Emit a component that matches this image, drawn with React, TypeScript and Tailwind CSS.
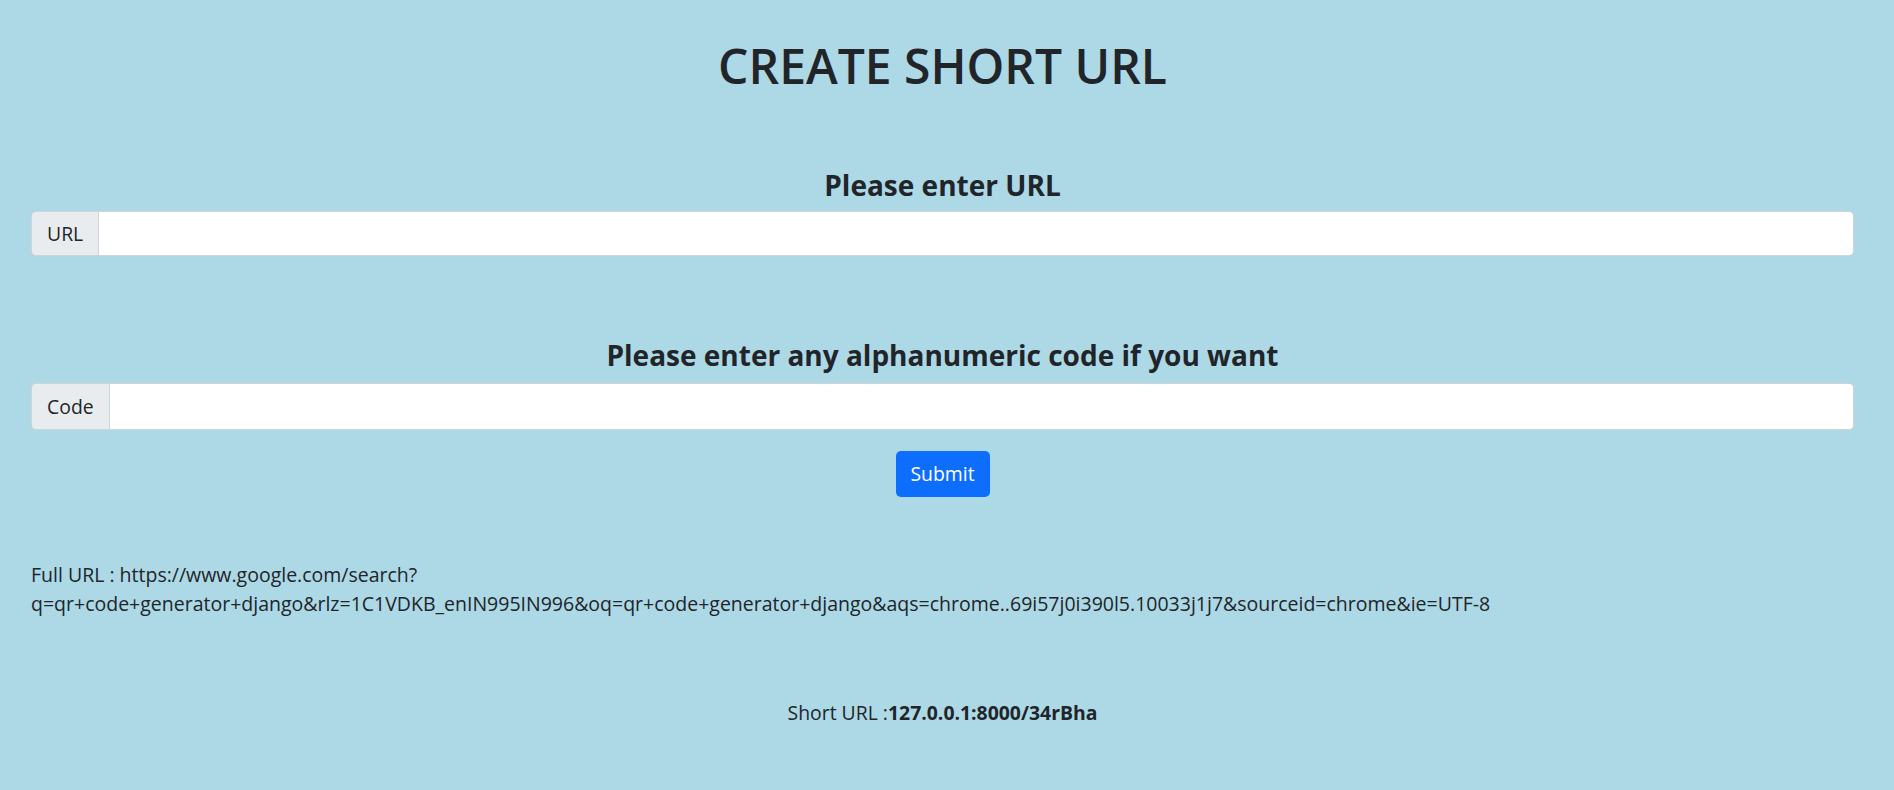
import React from "react";

export default function App() {
  return (
    <div
      className="min-h-screen bg-[#add8e6] text-[#212529] pl-[31px] pr-[40px]"
      style={{ fontFamily: '"Open Sans", "Noto Sans", sans-serif' }}
    >
      <h1 className="text-center text-[48px] leading-[1.2] font-semibold pt-[37px]">
        CREATE SHORT URL
      </h1>
      <h4 className="text-center text-[28px] leading-[1.2] font-bold mt-[74px] mb-[9px]">
        Please enter URL
      </h4>
      <div className="flex h-[45px] rounded-[5px] border border-[#ced4da] overflow-hidden">
        <span className="flex items-center px-[15px] bg-[#e9ecef] border-r border-[#ced4da] text-[19.4px]">
          URL
        </span>
        <input className="flex-1 bg-white outline-none px-3" />
      </div>
      <h4 className="text-center text-[28px] leading-[1.2] font-bold mt-[83px] mb-[10px]">
        Please enter any alphanumeric code if you want
      </h4>
      <div className="flex h-[47px] rounded-[5px] border border-[#ced4da] overflow-hidden">
        <span className="flex items-center px-[15px] bg-[#e9ecef] border-r border-[#ced4da] text-[19.4px]">
          Code
        </span>
        <input className="flex-1 bg-white outline-none px-3" />
      </div>
      <div className="flex justify-center mt-[21px]">
        <button className="h-[46px] w-[94px] rounded-[5px] bg-[#0d6efd] text-white text-[19.4px]">
          Submit
        </button>
      </div>
      <p className="mt-[63px] text-[19.5px] leading-[29px] break-all">
        Full URL : https://www.google.com/search?
        <br />
        q=qr+code+generator+django&amp;rlz=1C1VDKB_enIN995IN996&amp;oq=qr+code+generator+django&amp;aqs=chrome..69i57j0i390l5.10033j1j7&amp;sourceid=chrome&amp;ie=UTF-8
      </p>
      <p className="text-center mt-[80px] text-[19.4px] leading-[29px]">
        Short URL :<b>127.0.0.1:8000/34rBha</b>
      </p>
    </div>
  );
}
